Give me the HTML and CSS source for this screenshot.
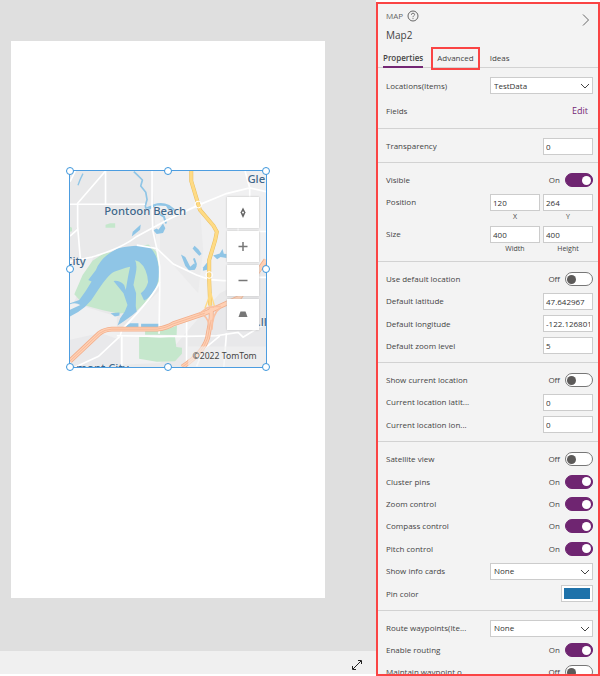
FILE: index.html
```html
<!DOCTYPE html>
<html lang="en">
<head>
<meta charset="utf-8">
<title>Map2 properties</title>
<link rel="stylesheet" href="styles.css">
</head>
<body>
<div class="app">
  <main class="workspace">
    <div class="stage">
      <div class="screen">
        <div class="map-control">
          <svg class="map" viewBox="29 32 590 590" preserveAspectRatio="none" role="img" aria-label="Map of Pontoon Beach">
            <rect x="29" y="32" width="590" height="590" fill="#e9e9ea"/>
            <path d="M275 32H619V330L480 400 300 610 29 622V520L180 510 300 390 290 265Z" fill="#f0f0f1"/>
            <path d="M300 180 420 140 430 270 415 400 300 270Z" fill="#ebebec"/>
            <path d="M29 300 100 290 40 430 170 470 170 510 29 535Z" fill="#f0f0f1"/>
            <path d="M460 450 619 400V622H400L450 540Z" fill="#e8e8ea"/>
            <path d="M29 540 120 520 180 540 180 622H29Z" fill="#e9e9eb"/>

            <g fill="#c5e7cc">
              <path d="M42 403 67 345 97 302 130 280 265 253 290 276 299 315V367Q290 395 230 453L177 462Q120 450 72 436Z"/>
              <path d="M136 194 150 189H165V203H136Z"/>
              <path d="M29 200 35 203V213L29 215Z"/>
              <path d="M237 530 300 534 345 530 349 562 366 564V582L345 605 290 606 237 597Z"/>
              <path d="M255 512 330 505 351 497 350 526 255 525Z"/>
            </g>

            <g fill="#8fc5e6">
              <path transform="translate(12 15)" d="M17 415 45 405Q65 380 82 350L72 345 95 315Q110 275 160 250 220 236 258 247 283 270 285 320 285 355 270 378 255 400 240 407L230 385Q245 375 252 352 250 310 225 290L213 286Q220 300 215 325L208 360 216 385 215 425 218 440Q195 460 160 482L168 460 182 440 190 420 178 385 148 348Q165 345 180 360L185 375Q192 330 198 305L185 308 150 320Q130 330 95 385 70 430 17 455V435L48 420Q35 412 17 418Z"/>
              <path d="M215 229 218 215 242 193 240 209Z"/>
              <path d="M280 210 290 205 295 209 309 190 316 204 309 219 290 222Z"/>
              <path d="M265 141Q295 120 328 134L350 151 326 150 318 137 290 136 265 150Z"/>
              <path d="M151 460 178 458 178 467 164 470Z"/>
              <path d="M190 503 210 490H235V505ZM243 492H297V504H243Z"/>
              <path d="M398 265 404 257 416 268 425 282 418 287 407 276Z"/>
              <path d="M363 283 376 291 391 320 403 310 409 320 405 329 387 331 376 318Z"/>
              <path d="M460 286 480 280 488 267 492 281 500 282V294L482 291 472 298Z"/>
              <path d="M430 322 443 306 442 329 429 332Z"/>
            </g>
            <g fill="none" stroke="#8fc5e6" stroke-linejoin="round">
              <path d="M221 34 230 42 247 59 242 77 257 96 261 118 256 136 257 145 270 140" stroke-width="5"/>
              <path d="M68 40Q60 55 53 75" stroke-width="4"/>
              <path d="M390 326Q408 327 408 312L402 295" stroke-width="6"/>
              <path d="M300 162 312 170 318 190" stroke-width="6"/>
            </g>

            <g fill="none" stroke="#fff" stroke-width="5">
              <path d="M136 32 52 129V200L60 295M29 228 52 208M29 64 45 32"/>
              <path d="M136 32V132M29 132H255M276 32V140L278 210 290 265 299 320V390L297 522"/>
              <path d="M29 305 95 291Q185 265 230 229L320 180 410 137 500 100 570 83 619 94M556 32 570 83V115"/>
              <path d="M299 365Q285 405 185 510L180 529 115 590 45 622M170 528 300 530 380 530 470 528 535 518 550 532 619 490M185 530V622"/>
              <path d="M380 485V622M500 520 492 622M410 620 430 570 480 528M230 255 290 265 340 312 410 345 450 359 490 362H500M535 180V260M594 214H619M594 352H619"/>
            </g>

            <path d="M394 32V62L412 122 420 149 461 197 471 215 466 240 448 300V360L451 437" fill="none" stroke="#e8bf63" stroke-width="12"/>
            <g fill="none" stroke="#ffdb84" stroke-width="9">
              <path d="M394 32V62L412 122 420 149 461 197 471 215 466 240 448 300V360L451 437"/>
              <path d="M452 400 435 446M453 400 464 440" stroke-width="4"/>
            </g>
            <circle cx="448" cy="345" r="10" fill="none" stroke="#fff" stroke-width="3"/>
            <circle cx="415" cy="133" r="10" fill="none" stroke="#fff" stroke-width="3"/>
            <g fill="none" stroke="#f2ae8b" stroke-width="15">
              <path d="M29 604 117 521Q133 509 155 508H292Q320 504 340 492L435 460 540 412 619 300"/>
              <path d="M454 440V475L443 535Q430 580 367 622"/>
            </g>
            <g fill="none" stroke="#ffd0b4" stroke-width="10">
              <path d="M29 604 117 521Q133 509 155 508H292Q320 504 340 492L435 460 540 412 619 300"/>
              <path d="M454 440V475L443 535Q430 580 367 622"/>
              <path d="M418 462 442 444 464 440 483 440M430 465Q450 480 448 510M480 445Q458 460 456 510" stroke-width="5" stroke="#fac0a0"/>
            </g>
            <path d="M29 604 117 521Q133 509 155 508H292Q320 504 340 492L435 460M454 480 443 535Q430 580 367 622" fill="none" stroke="#f2ae8b" stroke-width="2"/>

            <g class="place">
              <text x="132" y="165">Pontoon Beach</text>
              <text x="563" y="68">Gle</text>
              <text x="15" y="314">City</text>
              <text x="594" y="499">.ll</text>
              <text x="48" y="638">mont City</text>
            </g>
            <rect x="385" y="560" width="234" height="62" fill="#f2f2f2" opacity=".6"/>
            <text class="credit" x="398" y="599">©2022 TomTom</text>
          </svg>
          <div class="map-tools">
            <button type="button" aria-label="Reset bearing"><svg viewBox="0 0 31 31"><path d="M15.500 10.500 18 15.500 15.500 21 13 15.500Z" fill="#666"/><circle cx="15.500" cy="15.500" r="1" fill="#fff"/></svg></button>
            <button type="button" aria-label="Zoom in"><svg viewBox="0 0 31 31"><path d="M15.500 11V20M11 15.500H20" stroke="#777" stroke-width="1.500"/></svg></button>
            <button type="button" aria-label="Zoom out"><svg viewBox="0 0 31 31"><path d="M11 15.500H20" stroke="#777" stroke-width="1.500"/></svg></button>
            <button type="button" aria-label="Pitch"><svg viewBox="0 0 31 31"><path d="M13 12.500H18L20 18H11Z" fill="#777"/></svg></button>
          </div>
          <span class="handle h-nw"></span><span class="handle h-n"></span><span class="handle h-ne"></span>
          <span class="handle h-w"></span><span class="handle h-e"></span>
          <span class="handle h-sw"></span><span class="handle h-s"></span><span class="handle h-se"></span>
        </div>
      </div>
    </div>
    <footer class="statusbar">
      <button type="button" class="icon-button" aria-label="Fit to window"><svg width="12" height="12" viewBox="0 0 12 12" fill="none" stroke="#222"><path d="M2 10 10 2M7 1.500H10.500V5M1.500 7V10.500H5"/></svg></button>
    </footer>
  </main>

  <aside class="panel">
    <header class="panel-head">
      <div class="kind">
        <span>MAP</span>
        <button type="button" class="icon-button" aria-label="Help"><svg width="12" height="12" viewBox="0 0 12 12" fill="none" stroke="#666"><circle cx="6" cy="6" r="5"/><path d="M4.400 4.800Q4.400 3.200 6 3.200T7.600 4.600C7.600 5.600 6 5.700 6 7.200M6 8.100V9.100" stroke-width=".9"/></svg></button>
        <button type="button" class="icon-button collapse" aria-label="Collapse panel"><svg width="8" height="12" viewBox="0 0 8 12" fill="none" stroke="#666"><path d="M1 .5 6.500 6 1 11.500"/></svg></button>
      </div>
      <h1>Map2</h1>
    </header>
    <nav class="tabs">
      <button type="button" class="tab active">Properties</button>
      <button type="button" class="tab marked">Advanced</button>
      <button type="button" class="tab">Ideas</button>
    </nav>

    <section class="group roomy">
      <div class="row"><label for="items">Locations(Items)</label><span class="select"><select id="items"><option>TestData</option></select><svg viewBox="0 0 10 6"><path d="M1 1 5 5 9 1"/></svg></span></div>
      <div class="row"><span>Fields</span><a href="#fields">Edit</a></div>
    </section>
    <section class="group">
      <div class="row"><label for="transparency">Transparency</label><input class="box" id="transparency" type="text" value="0"></div>
    </section>
    <section class="group sized">
      <div class="row"><label for="visible">Visible</label><span class="state">On</span><input class="toggle" id="visible" type="checkbox" checked></div>
      <div class="row"><span>Position</span><input class="box" id="x" type="text" value="120"><input class="box" id="y" type="text" value="264"></div>
      <div class="captions"><label for="x">X</label><label for="y">Y</label></div>
      <div class="row"><span>Size</span><input class="box" id="w" type="text" value="400"><input class="box" id="h" type="text" value="400"></div>
      <div class="captions"><label for="w">Width</label><label for="h">Height</label></div>
    </section>
    <section class="group four">
      <div class="row"><label for="usedef">Use default location</label><span class="state">Off</span><input class="toggle" id="usedef" type="checkbox"></div>
      <div class="row"><label for="lat">Default latitude</label><input class="box" id="lat" type="text" value="47.642967"></div>
      <div class="row"><label for="lon">Default longitude</label><input class="box" id="lon" type="text" value="-122.126801"></div>
      <div class="row"><label for="zoom">Default zoom level</label><input class="box" id="zoom" type="text" value="5"></div>
    </section>
    <section class="group three">
      <div class="row"><label for="showcur">Show current location</label><span class="state">Off</span><input class="toggle" id="showcur" type="checkbox"></div>
      <div class="row"><label for="curlat">Current location latit...</label><input class="box" id="curlat" type="text" value="0"></div>
      <div class="row"><label for="curlon">Current location lon...</label><input class="box" id="curlon" type="text" value="0"></div>
    </section>
    <section class="group seven">
      <div class="row"><label for="sat">Satellite view</label><span class="state">Off</span><input class="toggle" id="sat" type="checkbox"></div>
      <div class="row"><label for="cluster">Cluster pins</label><span class="state">On</span><input class="toggle" id="cluster" type="checkbox" checked></div>
      <div class="row"><label for="zoomc">Zoom control</label><span class="state">On</span><input class="toggle" id="zoomc" type="checkbox" checked></div>
      <div class="row"><label for="compass">Compass control</label><span class="state">On</span><input class="toggle" id="compass" type="checkbox" checked></div>
      <div class="row"><label for="pitch">Pitch control</label><span class="state">On</span><input class="toggle" id="pitch" type="checkbox" checked></div>
      <div class="row"><label for="cards">Show info cards</label><span class="select"><select id="cards"><option>None</option></select><svg viewBox="0 0 10 6"><path d="M1 1 5 5 9 1"/></svg></span></div>
      <div class="row"><span>Pin color</span><button type="button" class="swatch" aria-label="Pin color"></button></div>
    </section>
    <section class="group">
      <div class="row"><label for="route">Route waypoints(Ite...</label><span class="select"><select id="route"><option>None</option></select><svg viewBox="0 0 10 6"><path d="M1 1 5 5 9 1"/></svg></span></div>
      <div class="row"><label for="routing">Enable routing</label><span class="state">On</span><input class="toggle" id="routing" type="checkbox" checked></div>
      <div class="row"><label for="maintain">Maintain waypoint o...</label><span class="state">Off</span><input class="toggle" id="maintain" type="checkbox"></div>
    </section>
  </aside>
</div>
</body>
</html>
```
FILE: styles.css
```css
* { box-sizing: border-box; }

body {
  margin: 0;
  background: #fff;
  color: #444;
  font: 8px/12px "Open Sans", "Noto Sans", sans-serif;
}

button, input, select {
  margin: 0;
  padding: 0;
  border: 0;
  border-radius: 0;
  background: none;
  color: inherit;
  font: inherit;
}

.app {
  display: grid;
  grid-template-columns: 1fr 224px;
  height: 100vh;
  overflow: hidden;
}

.workspace {
  display: flex;
  flex-direction: column;
  padding-bottom: 2px;
}

.stage {
  display: flex;
  flex: 1;
  padding: 41px 51px 53px 11px;
  background: #dfdfdf;
}

.screen {
  position: relative;
  flex: 1;
  background: #fff;
}

.statusbar {
  display: flex;
  align-items: center;
  justify-content: flex-end;
  height: 23px;
  padding: 4px 13px 0 0;
  background: #f0f0f0;
}

.icon-button {
  display: flex;
}

/* Map control placed on the app canvas */
.map-control {
  position: absolute;
  left: 58px;
  top: 129px;
  width: 198px;
  height: 198px;
  border: 1px solid #4d9de0;
}

.map {
  display: block;
  width: 100%;
  height: 100%;
}

.place {
  fill: #3f678a;
  stroke: #f4f4f4;
  stroke-width: 2px;
  paint-order: stroke;
  font: 500 34px "Noto Sans", sans-serif;
}

.credit {
  fill: #444;
  font: 26px "Noto Sans", sans-serif;
}

.map-tools {
  position: absolute;
  top: 26px;
  right: 7px;
  display: grid;
  gap: 3px;
}

.map-tools button {
  width: 32px;
  height: 31px;
  background: #fff;
  box-shadow: 0 0 2px #bbb;
}

.map-tools svg {
  display: block;
  width: 100%;
  height: 100%;
}

.handle {
  position: absolute;
  width: 8px;
  height: 8px;
  margin: -4px;
  border: 1px solid #3c96dc;
  border-radius: 50%;
  background: #fff;
}

.h-nw, .h-n, .h-ne { top: 0; }
.h-w, .h-e { top: 50%; }
.h-sw, .h-s, .h-se { top: 100%; }
.h-nw, .h-w, .h-sw { left: 0; }
.h-n, .h-s { left: 50%; }
.h-ne, .h-e, .h-se { left: 100%; }

/* Property panel */
.panel {
  margin-top: 2px;
  border: 2px solid #fa4444;
  background: #f3f3f3;
  overflow: hidden;
}

.panel-head {
  padding: 0 8px;
}

.kind {
  display: flex;
  align-items: center;
  gap: 4px;
  height: 24px;
  color: #666;
}

.collapse {
  margin: 8px 0 0 auto;
}

h1 {
  margin: 0;
  font-size: 10px;
  font-weight: 400;
  line-height: 14px;
}

.tabs {
  display: flex;
  align-items: flex-start;
  height: 26px;
  padding: 5px 5px 0;
  border-bottom: 1px solid #d2d2d2;
}

.tab {
  height: 21px;
}

.active {
  border-bottom: 2px solid #742774;
  padding-top: 2px;
  font-weight: 600;
}

.marked {
  height: 23px;
  margin: 0 10px 0 8px;
  padding: 0 4px 1px;
  border: 2px solid #fa4444;
}

.group {
  display: grid;
  grid-auto-rows: minmax(22px, 1fr);
  padding: 6px 5px 5px 8px;
  border-bottom: 1px solid #d2d2d2;
}

.roomy { grid-auto-rows: 25px; padding-top: 5px; }
.sized { grid-auto-rows: auto; padding-bottom: 6px; }
.four { min-height: 101px; }
.three { min-height: 79px; }
.seven { min-height: 169px; }

.row {
  display: flex;
  align-items: center;
  gap: 3px;
  min-height: 22px;
}

.row > :first-child {
  flex: 1;
  white-space: nowrap;
}

.row a {
  color: #742774;
  font-size: 9px;
  text-decoration: none;
  padding-right: 5px;
}

.captions {
  display: flex;
  justify-content: flex-end;
  gap: 3px;
  height: 10px;
  font-size: 7px;
  line-height: 8px;
  text-align: center;
}

.captions label {
  width: 50px;
}

.box {
  width: 50px;
  height: 17px;
  padding: 0 2px;
  border: 1px solid #ccc;
  background: #fff;
  color: #333;
}

.select {
  position: relative;
  display: flex;
  width: 103px;
}

.select select {
  appearance: none;
  width: 100%;
  height: 17px;
  padding: 0 3px;
  border: 1px solid #ccc;
  background: #fff;
  color: #333;
}

.select svg {
  position: absolute;
  right: 3px;
  top: 6px;
  width: 10px;
  height: 6px;
  fill: none;
  stroke: #444;
  pointer-events: none;
}

.state {
  padding-right: 2px;
}

.toggle {
  appearance: none;
  display: flex;
  align-items: center;
  width: 28px;
  height: 14px;
  padding: 0 1px;
  border: 1px solid #777;
  border-radius: 7px;
  background: #fff;
}

.toggle::before {
  content: "";
  width: 9px;
  height: 9px;
  border-radius: 50%;
  background: #5c5a59;
}

.toggle:checked {
  justify-content: flex-end;
  border-color: #6f2571;
  background: #6f2571;
}

.toggle:checked::before {
  background: #fff;
}

.swatch {
  width: 32px;
  height: 17px;
  padding: 2px;
  border: 1px solid #ccc;
  background: #1e72aa content-box;
  box-shadow: inset 0 0 0 2px #fff;
}
```
